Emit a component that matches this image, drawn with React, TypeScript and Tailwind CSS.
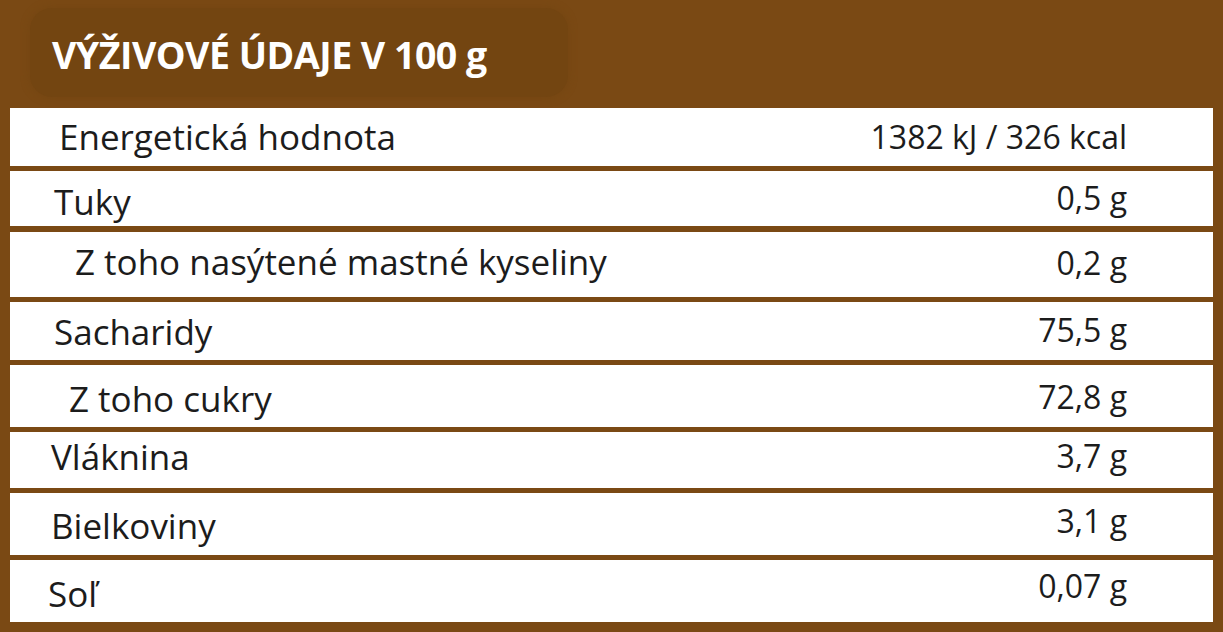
import React from "react";

type Row = {
  label: string;
  value: string;
  h: string;
  gap: string;
  lpl: string;
  lpt: string;
  vpt: string;
};

const rows: Row[] = [
  { label: "Energetická hodnota", value: "1382 kJ / 326 kcal", h: "h-[58px]", gap: "mt-0", lpl: "pl-[49px]", lpt: "pt-[11px]", vpt: "pt-[13px]" },
  { label: "Tuky", value: "0,5 g", h: "h-[55px]", gap: "mt-[5px]", lpl: "pl-[44px]", lpt: "pt-[13px]", vpt: "pt-[11px]" },
  { label: "Z toho nasýtené mastné kyseliny", value: "0,2 g", h: "h-[65px]", gap: "mt-[6px]", lpl: "pl-[65px]", lpt: "pt-[12px]", vpt: "pt-[15px]" },
  { label: "Sacharidy", value: "75,5 g", h: "h-[58px]", gap: "mt-[5px]", lpl: "pl-[44px]", lpt: "pt-[12px]", vpt: "pt-[12px]" },
  { label: "Z toho cukry", value: "72,8 g", h: "h-[62px]", gap: "mt-[5px]", lpl: "pl-[59px]", lpt: "pt-[16px]", vpt: "pt-[16px]" },
  { label: "Vláknina", value: "3,7 g", h: "h-[56px]", gap: "mt-[5px]", lpl: "pl-[41px]", lpt: "pt-[7px]", vpt: "pt-[8px]" },
  { label: "Bielkoviny", value: "3,1 g", h: "h-[62px]", gap: "mt-[5px]", lpl: "pl-[41px]", lpt: "pt-[15px]", vpt: "pt-[12px]" },
  { label: "Soľ", value: "0,07 g", h: "h-[62px]", gap: "mt-[5px]", lpl: "pl-[38px]", lpt: "pt-[16px]", vpt: "pt-[10px]" },
];

export default function App() {
  return (
    <div
      className="w-[1223px] h-[632px] bg-[#7a4914] px-[10px] overflow-hidden"
      style={{ fontFamily: '"Open Sans", "Noto Sans", sans-serif' }}
    >
      <div className="h-[108px] pt-[8px] pl-[20px]">
        <div className="w-[538px] h-[89px] rounded-[22px] bg-[#734511] shadow-[0_0_8px_#744612] pl-[22px] pt-[28px]">
          <h1 className="text-white font-bold text-[37.5px] leading-[37px] tracking-[-0.5px]">
            VÝŽIVOVÉ ÚDAJE V 100 g
          </h1>
        </div>
      </div>
      <div className="flex flex-col">
        {rows.map((r) => (
          <div key={r.label} className={`${r.h} ${r.gap} bg-white flex justify-between text-[#1c1c1c]`}>
            <div className={`${r.lpl} ${r.lpt} text-[35px] leading-[35px]`}>{r.label}</div>
            <div className={`${r.vpt} pr-[86px] text-[32px] leading-[32px]`}>{r.value}</div>
          </div>
        ))}
      </div>
    </div>
  );
}
